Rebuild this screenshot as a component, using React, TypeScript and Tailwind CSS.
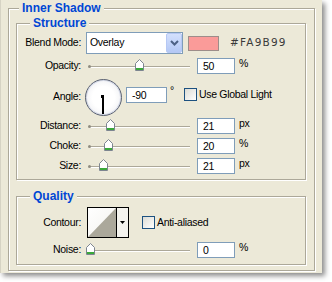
import React from "react";

function Thumb({ left }: { left: number }) {
  return (
    <svg
      className="absolute top-[1px]"
      style={{ left }}
      width={9}
      height={12}
      viewBox="0 0 9 12"
    >
      <polygon
        points="0.5,11.5 0.5,4.5 4.5,0.5 8.5,4.5 8.5,11.5"
        fill="#ffffff"
        stroke="#7d8590"
        strokeWidth={1}
      />
      <rect x={1} y={9} width={7} height={2} fill="#3aa83a" />
    </svg>
  );
}

function Slider({ pos }: { pos: number }) {
  return (
    <div className="relative w-[111px] h-[16px] shrink-0">
      <div className="absolute left-[3px] top-[8px] w-[101px] h-[2px] border-t border-t-[#ACA899] border-b border-b-white" />
      <div className="absolute left-[2px] top-[7px] w-[3px] h-[3px] rounded-full bg-[#8f8c80]" />
      <Thumb left={pos} />
    </div>
  );
}

function Input({ value, w = "w-[38px]" }: { value: string; w?: string }) {
  return (
    <div
      className={
        "h-[16px] shrink-0 bg-white border border-[#7F9DB9] pl-[5px] leading-[14px] text-black " +
        w
      }
    >
      {value}
    </div>
  );
}

function Label({ children, extra = "" }: { children: React.ReactNode; extra?: string }) {
  return <div className={"w-[64px] shrink-0 text-right text-black " + extra}>{children}</div>;
}

function SliderRow({
  label,
  pos,
  value,
  unit,
  mt,
}: {
  label: string;
  pos: number;
  value: string;
  unit: string;
  mt: string;
}) {
  return (
    <div className={"flex items-center h-[16px] " + mt}>
      <Label>{label}</Label>
      <div className="ml-[5px]">
        <Slider pos={pos} />
      </div>
      <Input value={value} />
      <div className="ml-[4px] self-start leading-[12px] -mt-[1px]">{unit}</div>
    </div>
  );
}

function Checkbox() {
  return (
    <div className="w-[13px] h-[13px] shrink-0 border border-[#1C5180] bg-gradient-to-br from-[#DCDCD5] to-white" />
  );
}

function Title({ children, left }: { children: React.ReactNode; left: string }) {
  return (
    <span
      className={
        "absolute top-[-8px] px-[3px] bg-[#ECE9D8] font-bold text-[12px] leading-[14px] tracking-[0px] text-[#0046D5] " +
        left
      }
    >
      {children}
    </span>
  );
}

export default function App() {
  return (
    <div className="w-[332px] h-[282px] bg-white overflow-hidden font-['Liberation_Sans',Arial,sans-serif] text-[10.5px] tracking-[-0.3px] text-black">
      <div className="w-[322px] h-[273px] bg-[#ECE9D8] pl-[8px] pt-[8px] shadow-[3px_3px_5px_rgba(0,0,0,0.45)] border-l border-l-[#d6d3c4]">
        {/* Outer group */}
        <div className="relative w-[307px] h-[263px] border border-[#ACA899] shadow-[inset_1px_1px_0_#fff,1px_1px_0_#fff] pl-[7px] pt-[14px] -ml-[1px]">
          <Title left="left-[10px]">Inner Shadow</Title>

          {/* Structure */}
          <div className="relative w-[290px] h-[157px] border border-[#ACA899] shadow-[inset_1px_1px_0_#fff,1px_1px_0_#fff] pt-[8px]">
            <Title left="left-[13px]">Structure</Title>

            {/* Blend mode */}
            <div className="flex items-center h-[22px]">
              <Label>Blend Mode:</Label>
              <div className="ml-[5px] w-[97px] h-[22px] border border-[#7F9DB9] bg-white flex items-center shrink-0">
                <div className="flex-1 pl-[3px]">Overlay</div>
                <div className="w-[16px] h-[20px] rounded-[2px] border border-[#B6C8F4] bg-gradient-to-b from-[#D3E0FD] to-[#B4C8F5] flex items-center justify-center">
                  <svg width={9} height={6} viewBox="0 0 9 6">
                    <path d="M1 1 L4.5 4.5 L8 1" fill="none" stroke="#4D6185" strokeWidth={2} />
                  </svg>
                </div>
              </div>
              <div className="ml-[5px] w-[31px] h-[15px] border border-[#9d8d8a] bg-[#FA9B99] shrink-0" />
              <div className="ml-[11px] font-['DejaVu_Sans',sans-serif] text-[10.5px] tracking-[1.2px] text-[#3a3a3a]">
                #FA9B99
              </div>
            </div>

            <SliderRow label="Opacity:" pos={49} value="50" unit="%" mt="mt-[4px]" />

            {/* Angle */}
            <div className="flex items-start h-[36px] mt-[5px]">
              <Label extra="mt-[10px]">Angle:</Label>
              <div className="ml-[4px] relative w-[37px] h-[37px] shrink-0 rounded-full border-[1.5px] border-[#5a6172] bg-[radial-gradient(circle,#ffffff_45%,#e6e7ec_100%)] shadow-[inset_0_0_0_1px_#d3d8e6]">
                <div className="absolute left-[15px] top-[15px] w-[3px] h-[3px] bg-black" />
                <div className="absolute left-[16px] top-[16px] w-[1.5px] h-[18px] bg-black" />
              </div>
              <div className="ml-[4px] mt-[8px]">
                <Input value="-90" w="w-[41px]" />
              </div>
              <div className="ml-[3px] mt-[5px] leading-[12px]">°</div>
              <div className="ml-[10px] mt-[9px]">
                <Checkbox />
              </div>
              <div className="ml-[2px] mt-[9px] leading-[13px]">Use Global Light</div>
            </div>

            <SliderRow label="Distance:" pos={20} value="21" unit="px" mt="mt-[3px]" />
            <SliderRow label="Choke:" pos={18} value="20" unit="%" mt="mt-[4px]" />
            <SliderRow label="Size:" pos={13} value="21" unit="px" mt="mt-[4px]" />
          </div>

          {/* Quality */}
          <div className="relative w-[290px] h-[69px] mt-[16px] border border-[#ACA899] shadow-[inset_1px_1px_0_#fff,1px_1px_0_#fff] pt-[10px]">
            <Title left="left-[13px]">Quality</Title>
            <div className="flex items-center h-[31px]">
              <Label>Contour:</Label>
              <div className="ml-[6px] w-[42px] h-[31px] border border-black flex shrink-0">
                <div className="w-[28px] h-full bg-white">
                  <svg width={28} height={29} viewBox="0 0 28 29">
                    <defs>
                      <linearGradient id="cg" x1="0" y1="0" x2="1" y2="1">
                        <stop offset="0" stopColor="#ffffff" />
                        <stop offset="1" stopColor="#f3f2ee" />
                      </linearGradient>
                    </defs>
                    <rect width={28} height={29} fill="url(#cg)" />
                    <polygon points="0,29 28,0 28,29" fill="#ABA89B" />
                  </svg>
                </div>
                <div className="flex-1 border-l border-black bg-[#F4F3EE] flex items-center justify-center">
                  <svg width={5} height={3} viewBox="0 0 5 3">
                    <polygon points="0,0 5,0 2.5,3" fill="#000" />
                  </svg>
                </div>
              </div>
              <div className="ml-[13px]">
                <Checkbox />
              </div>
              <div className="ml-[2px]">Anti-aliased</div>
            </div>
            <SliderRow label="Noise:" pos={0} value="0" unit="%" mt="mt-[4px]" />
          </div>
        </div>
      </div>
    </div>
  );
}
